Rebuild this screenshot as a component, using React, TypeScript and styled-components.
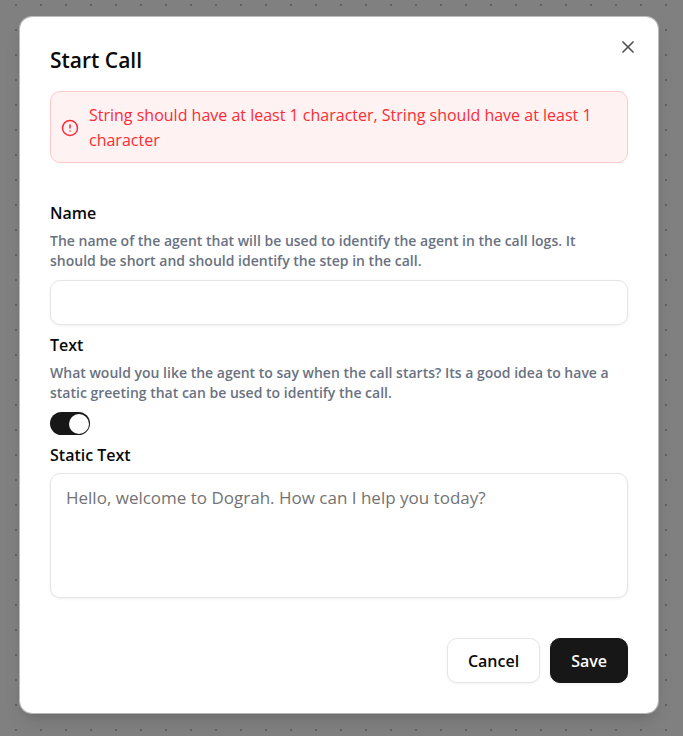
import React, { useId, useState } from "react";
import styled, { createGlobalStyle } from "styled-components";
import { CircleAlert, X } from "lucide-react";

const GlobalStyle = createGlobalStyle`
  *, *::before, *::after { box-sizing: border-box; }
  body {
    margin: 0;
    background: #808080;
    color: #0a0a0a;
    font-family: "Segoe UI", "Open Sans", "Noto Sans", sans-serif;
  }
  button, input, textarea { font: inherit; color: inherit; }
`;

const Backdrop = styled.div`
  display: flex;
  justify-content: center;
  align-items: flex-start;
  min-height: 100vh;
  padding: 16px 24px 22px 19px;
  background-color: #808080;
  background-image: radial-gradient(circle at 3px 3px, #606060 1px, transparent 1px);
  background-size: 25px 25px;
  background-position: 13px 2px;
`;

const Dialog = styled.section`
  position: relative;
  display: flex;
  flex-direction: column;
  width: 100%;
  max-width: 640px;
  padding: 30px;
  background: #ffffff;
  background-clip: padding-box;
  border: 1px solid rgba(229, 229, 229, 0.6);
  border-radius: 13px;
  box-shadow: 0 12px 19px -4px rgba(0, 0, 0, 0.1), 0 5px 8px -5px rgba(0, 0, 0, 0.1);
`;

const Title = styled.h2`
  margin: 0 0 18px;
  font-size: 21px;
  line-height: 26px;
  font-weight: 600;
`;

const CloseButton = styled.button`
  position: absolute;
  top: 20px;
  right: 20px;
  display: flex;
  padding: 0;
  border: 0;
  background: none;
  opacity: 0.7;
  cursor: pointer;
`;

const Alert = styled.div`
  display: flex;
  align-items: center;
  gap: 10px;
  margin-bottom: 41px;
  padding: 11px 10px 9px;
  border: 1px solid #ffc9c9;
  border-radius: 10px;
  background: #fef2f2;
  color: #fb2c36;
  font-size: 16px;
  line-height: 25px;

  svg { flex: none; }
`;

const Form = styled.form`
  display: flex;
  flex-direction: column;
`;

const Fields = styled.div`
  display: flex;
  flex-direction: column;
  gap: 11px;
`;

const Field = styled.div`
  display: flex;
  flex-direction: column;
  align-items: flex-start;
  gap: 9px;
`;

const Label = styled.label`
  font-size: 16px;
  line-height: 18px;
  font-weight: 600;
`;

const Description = styled.p`
  margin: 0;
  padding-right: 8px;
  color: #6a7282;
  font-size: 14px;
  line-height: 20px;
  font-weight: 600;
`;

const TextInput = styled.input`
  width: 100%;
  height: 45px;
  padding: 5px 15px;
  border: 1px solid #e5e5e5;
  border-radius: 10px;
  background: #ffffff;
  box-shadow: 0 1px 3px rgba(0, 0, 0, 0.06);
  font-size: 17px;
  outline: none;
`;

const TextArea = styled.textarea`
  display: block;
  width: 100%;
  height: 125px;
  padding: 11px 15px;
  border: 1px solid #e5e5e5;
  border-radius: 10px;
  background: #ffffff;
  box-shadow: 0 1px 3px rgba(0, 0, 0, 0.06);
  font-size: 17px;
  line-height: 25px;
  resize: none;
  outline: none;

  &::placeholder { color: #737373; opacity: 1; }
`;

const Switch = styled.input`
  appearance: none;
  display: flex;
  align-items: center;
  justify-content: flex-start;
  width: 40px;
  height: 23px;
  margin: 0;
  padding: 1px;
  border-radius: 12px;
  background: #e5e5e5;
  cursor: pointer;

  &::before {
    content: "";
    width: 20px;
    height: 20px;
    border-radius: 50%;
    background: #ffffff;
  }

  &:checked {
    justify-content: flex-end;
    background: #171717;
  }
`;

const Footer = styled.div`
  display: flex;
  justify-content: flex-end;
  gap: 10px;
  margin-top: 40px;
`;

const Button = styled.button<{ $primary?: boolean }>`
  height: 45px;
  padding: 2px 20px 0;
  border: 1px solid ${(p) => (p.$primary ? "#171717" : "#e5e5e5")};
  border-radius: 10px;
  background: ${(p) => (p.$primary ? "#171717" : "#ffffff")};
  color: ${(p) => (p.$primary ? "#fafafa" : "#0a0a0a")};
  box-shadow: 0 1px 3px rgba(0, 0, 0, 0.06);
  font-size: 16px;
  line-height: 25px;
  font-weight: 600;
  cursor: pointer;
`;

export default function App() {
  const id = useId();
  const [name, setName] = useState("");
  const [enabled, setEnabled] = useState(true);
  const [greeting, setGreeting] = useState("");

  return (
    <>
      <GlobalStyle />
      <Backdrop>
        <Dialog role="dialog" aria-modal="true" aria-labelledby={`${id}-title`}>
          <Title id={`${id}-title`}>Start Call</Title>
          <Alert role="alert">
            <CircleAlert size={18} aria-hidden />
            <span>
              String should have at least 1 character, String should have at least 1 character
            </span>
          </Alert>
          <Form onSubmit={(e) => e.preventDefault()}>
            <Fields>
              <Field>
                <Label htmlFor={`${id}-name`}>Name</Label>
                <Description id={`${id}-name-help`}>
                  The name of the agent that will be used to identify the agent in the call logs. It
                  should be short and should identify the step in the call.
                </Description>
                <TextInput
                  id={`${id}-name`}
                  aria-describedby={`${id}-name-help`}
                  value={name}
                  onChange={(e) => setName(e.target.value)}
                />
              </Field>
              <Field>
                <Label htmlFor={`${id}-text`}>Text</Label>
                <Description id={`${id}-text-help`}>
                  What would you like the agent to say when the call starts? Its a good idea to have
                  a static greeting that can be used to identify the call.
                </Description>
                <Switch
                  type="checkbox"
                  role="switch"
                  id={`${id}-text`}
                  aria-describedby={`${id}-text-help`}
                  checked={enabled}
                  onChange={(e) => setEnabled(e.target.checked)}
                />
              </Field>
              <Field>
                <Label htmlFor={`${id}-static`}>Static Text</Label>
                <TextArea
                  id={`${id}-static`}
                  placeholder="Hello, welcome to Dograh. How can I help you today?"
                  value={greeting}
                  onChange={(e) => setGreeting(e.target.value)}
                />
              </Field>
            </Fields>
            <Footer>
              <Button type="button">Cancel</Button>
              <Button type="submit" $primary>
                Save
              </Button>
            </Footer>
          </Form>
          <CloseButton type="button" aria-label="Close">
            <X size={20} strokeWidth={2} />
          </CloseButton>
        </Dialog>
      </Backdrop>
    </>
  );
}
